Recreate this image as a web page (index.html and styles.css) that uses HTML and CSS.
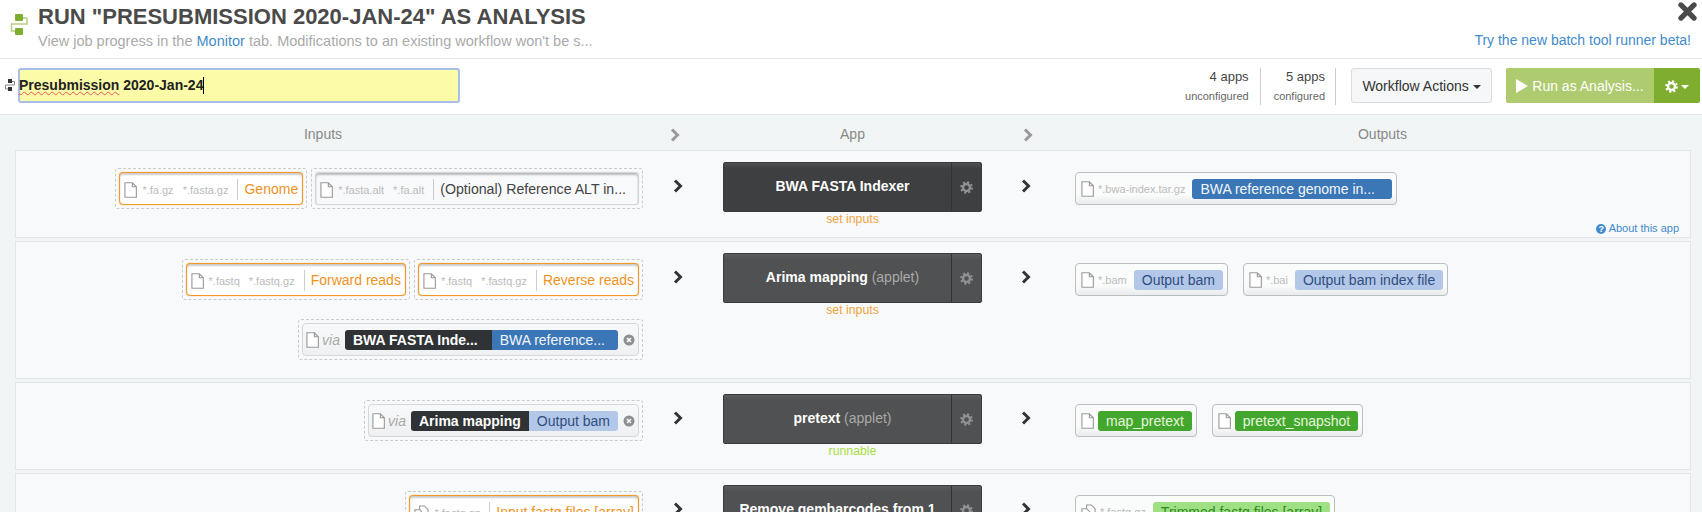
FILE: index.html
```html
<!DOCTYPE html>
<html>
<head>
<meta charset="utf-8">
<title>Run as Analysis</title>
<link rel="stylesheet" href="styles.css">
</head>
<body>
<svg class="defs" width="0" height="0">
  <symbol id="file" viewBox="0 0 14 17"><path d="M1 .7H9L13.300 5V16.300H1ZM9 .7V5H13.300" fill="#fff" stroke="#999" stroke-width="1.200"/></symbol>
  <symbol id="files" viewBox="0 0 16 17"><path d="M6 1H11L15 5V13H6Z" fill="#fff" stroke="#999" stroke-width="1.200"/><path d="M1 5H6L10 9V16H1Z" fill="#fff" stroke="#999" stroke-width="1.200"/></symbol>
  <symbol id="gear" viewBox="0 0 16 16"><circle cx="8" cy="8" r="4.300" fill="none" stroke="currentColor" stroke-width="3"/><circle cx="8" cy="8" r="6.500" fill="none" stroke="currentColor" stroke-width="2.600" stroke-dasharray="2.550 2.550"/></symbol>
  <symbol id="chev" viewBox="0 0 10 14"><path d="M2 1.500L7.500 7L2 12.500" fill="none" stroke="currentColor" stroke-width="3"/></symbol>
  <symbol id="remove" viewBox="0 0 12 12"><circle cx="6" cy="6" r="5.500" fill="#8b8f90"/><path d="M4 4L8 8M8 4L4 8" stroke="#fff" stroke-width="1.700"/></symbol>
</svg>

<div class="header">
  <svg class="logo" viewBox="0 0 18 23" width="18" height="23">
    <path d="M12 5H17V11H1.500V18H6" fill="none" stroke="#b9d084" stroke-width="1.500"/>
    <rect x="5" y="1" width="8" height="7" rx="1" fill="#7fad2f"/>
    <rect x="5" y="15" width="8" height="7" rx="1" fill="#7fad2f"/>
  </svg>
  <div class="titles">
    <h1>RUN "PRESUBMISSION 2020-JAN-24" AS ANALYSIS</h1>
    <p class="sub">View job progress in the <a href="#">Monitor</a> tab. Modifications to an existing workflow won't be s...</p>
  </div>
  <div class="header-right">
    <svg class="close" viewBox="0 0 16 16" width="19" height="19"><path d="M2.500 2.500L13.500 13.500M13.500 2.500L2.500 13.500" stroke="#4a4a4a" stroke-width="4.400" stroke-linecap="round"/></svg>
    <a class="beta" href="#">Try the new batch tool runner beta!</a>
  </div>
</div>

<div class="toolbar">
  <svg class="mini" viewBox="0 0 10 12" width="10" height="12">
    <path d="M5 2.500H9.500V6H.5V10H5" fill="none" stroke="#888" stroke-width="1"/>
    <rect x="3" y="0" width="4" height="4" fill="#333"/>
    <rect x="3" y="8" width="4" height="4" fill="#333"/>
  </svg>
  <div class="name"><span class="typo">Presubmission</span> 2020-Jan-24<span class="caret"></span></div>
  <div class="stats">
    <div class="stat"><b>4 apps</b><small>unconfigured</small></div>
    <div class="stat"><b>5 apps</b><small>configured</small></div>
  </div>
  <button class="actions">Workflow Actions <i class="down"></i></button>
  <div class="run">
    <button class="run-main"><svg viewBox="0 0 12 14" width="12" height="14"><path d="M0 0L12 7L0 14Z" fill="#fff"/></svg> Run as Analysis...</button>
    <button class="run-gear"><svg width="13" height="13"><use href="#gear"/></svg> <i class="down"></i></button>
  </div>
</div>

<div class="stages">
  <div class="grid heads">
    <div class="head-cell">Inputs</div>
    <div class="arrow-cell left"><svg class="chev light" width="10" height="14"><use href="#chev"/></svg></div>
    <div class="head-cell">App</div>
    <div class="arrow-cell right"><svg class="chev light" width="10" height="14"><use href="#chev"/></svg></div>
    <div class="head-cell">Outputs</div>
  </div>

  <div class="grid row">
    <div class="inputs">
      <div class="slot"><div class="chip required"><svg class="doc" width="13" height="16"><use href="#file"/></svg><span class="ext">*.fa.gz</span><span class="ext">*.fasta.gz</span><span class="lbl">Genome</span></div></div>
      <div class="slot"><div class="chip optional"><svg class="doc" width="13" height="16"><use href="#file"/></svg><span class="ext">*.fasta.alt</span><span class="ext">*.fa.alt</span><span class="lbl cut">(Optional) Reference ALT in...</span></div></div>
    </div>
    <div class="arrow-cell"><svg class="chev" width="10" height="14"><use href="#chev"/></svg></div>
    <div class="app-cell">
      <div class="app hot"><div class="app-name">BWA FASTA Indexer</div><div class="app-gear"><svg width="13" height="13"><use href="#gear"/></svg></div></div>
      <div class="status todo">set inputs</div>
    </div>
    <div class="arrow-cell"><svg class="chev" width="10" height="14"><use href="#chev"/></svg></div>
    <div class="outputs">
      <div class="out"><svg class="doc" width="13" height="16"><use href="#file"/></svg><span class="ext">*.bwa-index.tar.gz</span><span class="pill blue wide">BWA reference genome in...</span></div>
    </div>
    <a class="about" href="#"><i class="q">?</i> About this app</a>
  </div>

  <div class="grid row">
    <div class="inputs">
      <div class="slot"><div class="chip required"><svg class="doc" width="13" height="16"><use href="#file"/></svg><span class="ext">*.fastq</span><span class="ext">*.fastq.gz</span><span class="lbl">Forward reads</span></div></div>
      <div class="slot"><div class="chip required"><svg class="doc" width="13" height="16"><use href="#file"/></svg><span class="ext">*.fastq</span><span class="ext">*.fastq.gz</span><span class="lbl">Reverse reads</span></div></div>
      <div class="slot"><div class="chip linked"><svg class="doc" width="13" height="16"><use href="#file"/></svg><em>via</em><span class="pill dark cut">BWA FASTA Inde...</span><span class="pill blue join cut">BWA reference...</span><svg class="x" width="12" height="12"><use href="#remove"/></svg></div></div>
    </div>
    <div class="arrow-cell"><svg class="chev" width="10" height="14"><use href="#chev"/></svg></div>
    <div class="app-cell">
      <div class="app"><div class="app-name">Arima mapping <span>(applet)</span></div><div class="app-gear"><svg width="13" height="13"><use href="#gear"/></svg></div></div>
      <div class="status todo">set inputs</div>
    </div>
    <div class="arrow-cell"><svg class="chev" width="10" height="14"><use href="#chev"/></svg></div>
    <div class="outputs">
      <div class="out"><svg class="doc" width="13" height="16"><use href="#file"/></svg><span class="ext">*.bam</span><span class="pill pale">Output bam</span></div>
      <div class="out"><svg class="doc" width="13" height="16"><use href="#file"/></svg><span class="ext">*.bai</span><span class="pill pale">Output bam index file</span></div>
    </div>
  </div>

  <div class="grid row">
    <div class="inputs">
      <div class="slot"><div class="chip linked"><svg class="doc" width="13" height="16"><use href="#file"/></svg><em>via</em><span class="pill dark">Arima mapping</span><span class="pill pale join">Output bam</span><svg class="x" width="12" height="12"><use href="#remove"/></svg></div></div>
    </div>
    <div class="arrow-cell"><svg class="chev" width="10" height="14"><use href="#chev"/></svg></div>
    <div class="app-cell">
      <div class="app"><div class="app-name">pretext <span>(applet)</span></div><div class="app-gear"><svg width="13" height="13"><use href="#gear"/></svg></div></div>
      <div class="status ok">runnable</div>
    </div>
    <div class="arrow-cell"><svg class="chev" width="10" height="14"><use href="#chev"/></svg></div>
    <div class="outputs">
      <div class="out"><svg class="doc" width="13" height="16"><use href="#file"/></svg><span class="pill green">map_pretext</span></div>
      <div class="out"><svg class="doc" width="13" height="16"><use href="#file"/></svg><span class="pill green">pretext_snapshot</span></div>
    </div>
  </div>

  <div class="grid row">
    <div class="inputs">
      <div class="slot"><div class="chip required"><svg class="doc" width="15" height="16"><use href="#files"/></svg><span class="ext">*.fastq.gz</span><span class="lbl">Input fastq files [array]</span></div></div>
    </div>
    <div class="arrow-cell"><svg class="chev" width="10" height="14"><use href="#chev"/></svg></div>
    <div class="app-cell">
      <div class="app"><div class="app-name long">Remove gembarcodes from 1</div><div class="app-gear"><svg width="13" height="13"><use href="#gear"/></svg></div></div>
    </div>
    <div class="arrow-cell"><svg class="chev" width="10" height="14"><use href="#chev"/></svg></div>
    <div class="outputs">
      <div class="out"><svg class="doc" width="15" height="16"><use href="#files"/></svg><span class="ext">*.fastq.gz</span><span class="pill mint">Trimmed fastq files [array]</span></div>
    </div>
  </div>
</div>
</body>
</html>
```

FILE: styles.css
```css
html, body { margin: 0; padding: 0; height: 512px; overflow: hidden; }
body { background: #fff; color: #333; font-family: "Liberation Sans", Arial, sans-serif; font-size: 14px; }
a { color: #428bca; text-decoration: none; }
button { font-family: inherit; font-size: 14px; }
i { font-style: normal; }
.defs { position: absolute; }

/* header */
.header { display: flex; height: 58px; border-bottom: 1px solid #e3e6e7; }
.logo { margin: 13px 0 0 10px; flex: none; }
.titles { margin-left: 10px; flex: 1; }
h1 { margin: 4px 0 0; font-size: 22px; line-height: 26px; font-weight: bold; color: #4a4a4a; }
.sub { margin: 1px 0 0; padding: 0; color: #aaa; font-size: 14.5px; line-height: 20px; }
.header-right { display: flex; flex-direction: column; align-items: flex-end; padding-right: 11px; }
.close { margin: 2px -6px 0 0; }
.beta { margin-top: 9px; line-height: 20px; }

/* toolbar */
.toolbar { display: flex; align-items: flex-start; height: 55px; border-bottom: 1px solid #e3e6e7; }
.mini { margin: 20px 0 0 5px; flex: none; }
.name { margin: 9px 0 0 3px; width: 442px; height: 35px; box-sizing: border-box; background: #fbfba8; border: 2px solid #a9bfe8; border-radius: 3px; font-weight: bold; font-size: 14px; line-height: 31px; color: #222; text-indent: -1px; }
.typo { text-decoration: underline wavy #e55 1px; text-underline-offset: 1px; }
.caret { display: inline-block; width: 1px; height: 17px; background: #000; vertical-align: -4px; }
.stats { display: flex; margin: 9px 15px 0 auto; }
.stat { display: flex; flex-direction: column; align-items: flex-end; height: 37px; padding: 0 11px 0 13px; border-left: 1px solid #ccc; }
.stat:first-child { border-left: 0; }
.stat:last-child { border-right: 1px solid #ccc; padding-right: 10px; }
.stat b { font-weight: normal; font-size: 13px; line-height: 18px; color: #444; }
.stat small { font-size: 11px; line-height: 20px; color: #666; }
.actions { margin-top: 9px; width: 141px; height: 35px; padding: 0; background: #f5f7f8; border: 1px solid #d9dcdd; border-radius: 3px; color: #333; }
.down { display: inline-block; border: 4px solid transparent; border-top-color: currentColor; border-bottom: 0; vertical-align: 2px; }
.run { display: flex; margin: 9px 2px 0 14px; height: 35px; }
.run button { border: 0; padding: 0; color: #fff; height: 35px; }
.run-main { width: 148px; background: #aecb70; border-radius: 2px 0 0 2px; color: #f5f9ec; }
.run-main svg { vertical-align: -2px; }
.run-gear { width: 46px; background: #7fad2f; border-radius: 0 2px 2px 0; }
.run-gear svg { vertical-align: -2px; color: #fff; }

/* stages */
.stages { background: #f2f5f6; height: 397px; overflow: hidden; padding: 0 11px 0 15px; }
.grid { display: grid; grid-template-columns: 628px 70px 10px 259px 88px 1fr; }
.grid > .app-cell, .heads > .head-cell:nth-child(3) { grid-column: 4; }
.heads { height: 35px; line-height: 38px; color: #888; font-size: 14px; text-align: center; }
.head-cell:first-child { width: 616px; }
.head-cell:last-child { padding-left: 4px; }
.arrow-cell { display: flex; justify-content: center; }
.heads .arrow-cell { align-items: center; padding-top: 2px; }
.heads .left { padding-right: 6px; }
.heads .right { padding-left: 4px; }
.chev { color: #333; }
.chev.light { color: #999; }

.row { position: relative; min-height: 88px; margin-bottom: 3px; box-sizing: border-box; background: #f8f9fb; border: 1px solid #e3e6e7; padding-top: 11px; grid-template-columns: 627px 70px 10px 259px 88px 1fr; }
.row .arrow-cell { padding-top: 17px; }
.inputs { display: flex; flex-wrap: wrap; justify-content: flex-end; align-content: flex-start; gap: 19px 4px; padding: 6px 0 18px; }
.slot { border: 1px dashed #c9cccd; border-radius: 3px; height: 41px; box-sizing: border-box; padding: 3px; }
.chip { display: flex; align-items: center; height: 33px; box-sizing: border-box; border-radius: 4px; padding: 2px 4px 0; background: #fff; font-size: 14px; white-space: nowrap; }
.required { border: 1px solid #ef9a2b; box-shadow: 0 0 1px #ef9a2b, inset 0 2px 2px #ccc; color: #f0921e; }
.optional { border: 1px solid #d4d7d9; box-shadow: 0 0 1px #c4c7c9, inset 0 2px 2px #bbb; background: #f8f9fb; color: #444; }
.linked { border: 1px solid #d5d8da; background: linear-gradient(#f8f9fa, #eef0f1); padding: 0 3px; }
.linked em { color: #aaa; font-size: 14px; margin: 0 5px 0 -1px; }
.linked .doc { margin-right: 4px; }
.doc { flex: none; margin-right: 5px; }
.ext { font-size: 11px; color: #bbb; margin-right: 9px; }
.lbl { border-left: 1px solid #ccc; padding: 3px 0 3px 6px; line-height: 15px; }
.lbl.cut { padding-right: 8px; font-size: 14.150px; }

.app-cell { text-align: center; }
.app { display: flex; height: 50px; box-sizing: border-box; color: #fff; background: linear-gradient(#5a5c5d, #4f5152 6px); border: 1px solid #3a3b3c; border-radius: 2px; }
.app.hot { background: linear-gradient(#4d4e50, #3e3f41 6px); }
.app-name { flex: 1; box-sizing: border-box; padding-left: 10px; text-align: center; font-weight: bold; font-size: 14px; line-height: 46px; white-space: nowrap; overflow: hidden; }
.app-name.long { padding-left: 0; }
.app-name span { font-weight: normal; color: #aaa; }
.app-gear { width: 29px; border-left: 1px solid #333; color: #8f9193; display: flex; align-items: center; justify-content: center; }
.status { font-size: 12.300px; line-height: 15px; }
.todo { color: #f0a33b; }
.ok { color: #a6dd3f; }

.outputs { display: flex; gap: 15px; align-items: flex-start; padding: 10px 0 0 5px; }
.out { display: flex; align-items: center; height: 33px; box-sizing: border-box; padding: 0 4px 0 5px; background: linear-gradient(#fafbfb 70%, #e9ebec); border: 1px solid #bcbfc1; border-radius: 4px; white-space: nowrap; }
.out .doc { margin-right: 4px; }
.out .ext { margin-right: 7px; }
.pill { display: inline-block; height: 20px; line-height: 20px; padding: 0 8px; border-radius: 3px; font-size: 14px; }
.pill.cut { padding-right: 13px; }
.dark.cut { padding-right: 14px; }
.blue { background: #3b76b6; color: #f2f6fb; }
.blue.wide { width: 200px; box-sizing: border-box; }
.pale { background: #b3c7e8; color: #2f4f7f; }
.green { background: #43a62d; color: #e4f6dc; }
.mint { background: #a0e085; color: #2e8a1e; }
.dark { background: #303335; color: #fff; font-weight: bold; border-radius: 3px 0 0 3px; }
.join { border-radius: 0 3px 3px 0; }
.x { margin-left: 5px; flex: none; }

.about { position: absolute; right: 11px; bottom: 1px; font-size: 11px; line-height: 16px; }
.q { display: inline-block; width: 10px; height: 10px; line-height: 10px; border-radius: 50%; background: #428bca; color: #fff; font-weight: bold; font-size: 9px; text-align: center; }
```
